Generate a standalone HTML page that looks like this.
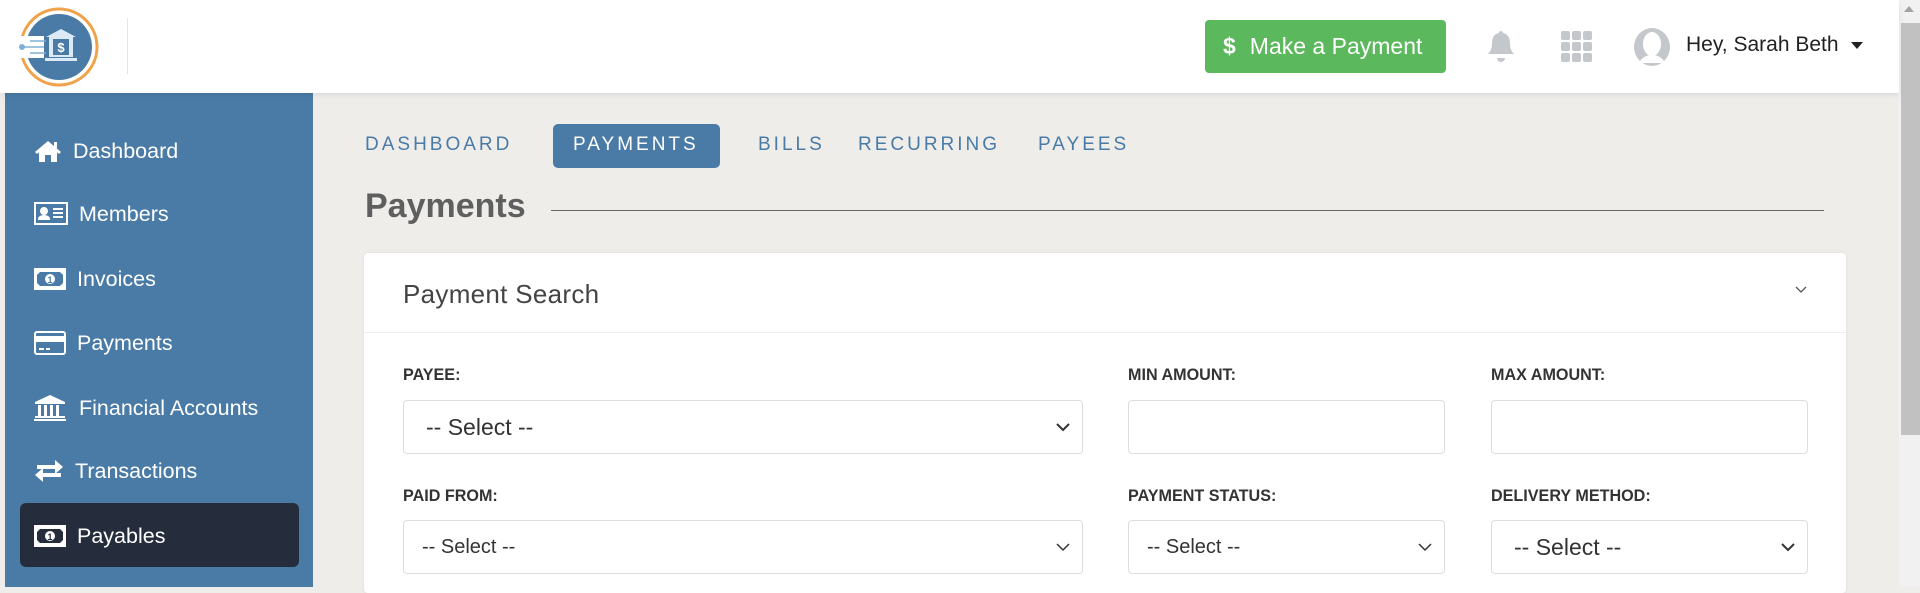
<!DOCTYPE html>
<html><head><meta charset="utf-8"><style>
*{box-sizing:border-box;margin:0;padding:0}
body{width:1920px;height:587px;overflow:hidden;background:#eeedea;font-family:"Liberation Sans",sans-serif;position:relative}
.hdr{position:absolute;left:0;top:0;width:1899px;height:93px;background:#fff;box-shadow:0 2px 6px rgba(0,0,0,.08);z-index:2}
.sb{position:absolute;left:5px;top:93px;width:308px;height:494px;background:#4a7ba6}
.item{position:absolute;left:0;width:308px;height:40px;color:#fff;font-size:21.5px;display:flex;align-items:center}
.item svg{position:absolute;left:29px}
.item span{position:absolute;left:68px}
.act{position:absolute;left:15px;top:410px;width:279px;height:64px;background:#252d3d;border-radius:6px}
.scroll{position:absolute;left:1899px;top:0;width:21px;height:587px;background:#f1f1f1}
.thumb{position:absolute;left:1901px;top:23px;width:19px;height:412px;background:#c1c1c1}
.tab{position:absolute;top:134px;font-size:19px;letter-spacing:3px;color:#4a7ba6}
.card{position:absolute;left:364px;top:253px;width:1482px;height:340px;background:#fff;border-radius:4px;box-shadow:0 0 3px rgba(0,0,0,.08)}
.lbl{position:absolute;font-size:17px;color:#333;font-weight:bold;transform:scaleX(.95);transform-origin:left}
.inp{position:absolute;height:54px;border:1px solid #ddd;border-radius:4px;background:#fff;font-size:22px;color:#333;padding-left:22px;display:flex;align-items:center}
.inp .ch{position:absolute;right:12px;top:22px}
</style></head><body>
<div class="hdr">
 <svg style="position:absolute;left:16px;top:6px" width="86" height="84" viewBox="0 0 86 84">
  <circle cx="43" cy="41" r="38" fill="none" stroke="#f0a24a" stroke-width="3"/>
  <circle cx="43" cy="41" r="33" fill="#4a7ba6"/>
  <rect x="-2" y="30" width="30" height="22" fill="#fff"/>
  <circle cx="6" cy="41" r="3" fill="#7eb0d6"/><line x1="6" y1="41" x2="28" y2="41" stroke="#7eb0d6" stroke-width="1.5"/>
  <line x1="14" y1="35" x2="30" y2="35" stroke="#7eb0d6" stroke-width="1.5"/><line x1="14" y1="47" x2="30" y2="47" stroke="#7eb0d6" stroke-width="1.5"/>
  <polygon points="30,31 45,23 60,31" fill="#dbeaf6"/>
  <rect x="33" y="31" width="24" height="20" fill="#dbeaf6"/><rect x="37" y="33" width="16" height="16" fill="#4a7ba6"/>
  <text x="45" y="46" font-size="13" font-weight="bold" fill="#fff" text-anchor="middle" font-family="Liberation Sans">$</text>
  <rect x="29" y="52" width="32" height="3" fill="#dbeaf6"/>
 </svg>
 <div style="position:absolute;left:127px;top:18px;width:1px;height:56px;background:#e5e5e5"></div>
 <div style="position:absolute;left:1205px;top:20px;width:241px;height:53px;background:#5cb85c;border-radius:4px;color:#fff;font-size:23px;display:flex;align-items:center;padding-left:18px"><b style="margin-right:14px;font-size:23px">$</b>Make a Payment</div>
 <svg style="position:absolute;left:1486px;top:29px" width="30" height="36" viewBox="0 0 30 36"><path d="M15 2c1.5 0 2 1 2 2 5 1 7 5 7 10 0 6 2 9 4 11H2c2-2 4-5 4-11 0-5 2-9 7-10 0-1 .5-2 2-2z" fill="#c4c8cd"/><path d="M11 29h8a4 4 0 0 1-8 0z" fill="#c4c8cd"/></svg>
 <svg style="position:absolute;left:1561px;top:31px" width="31" height="31" viewBox="0 0 31 31" fill="#c4c8cd"><rect x="0" y="0" width="9" height="9" rx="2"/><rect x="11" y="0" width="9" height="9" rx="2"/><rect x="22" y="0" width="9" height="9" rx="2"/><rect x="0" y="11" width="9" height="9" rx="2"/><rect x="11" y="11" width="9" height="9" rx="2"/><rect x="22" y="11" width="9" height="9" rx="2"/><rect x="0" y="22" width="9" height="9" rx="2"/><rect x="11" y="22" width="9" height="9" rx="2"/><rect x="22" y="22" width="9" height="9" rx="2"/></svg>
 <svg style="position:absolute;left:1633px;top:27px" width="38" height="40" viewBox="0 0 38 40"><ellipse cx="19" cy="20" rx="18" ry="19" fill="#c4c8cd"/><ellipse cx="19" cy="17" rx="9" ry="12" fill="#fff"/><path d="M6 36c3-6 8-8 13-8s10 2 13 8z" fill="#fff"/></svg>
 <div style="position:absolute;left:1686px;top:33px;font-size:21px;color:#222">Hey, Sarah Beth</div>
 <div style="position:absolute;left:1851px;top:42px;border-left:6px solid transparent;border-right:6px solid transparent;border-top:7px solid #222"></div>
</div>
<div class="scroll"></div><div class="thumb"></div>
<div style="position:absolute;left:1904px;top:6px;border-left:5px solid transparent;border-right:5px solid transparent;border-bottom:6px solid #a3a3a3"></div>
<div class="sb">
 <div class="act"></div>
 <div class="item" style="top:38px"><svg width="28" height="24" viewBox="0 0 28 24" fill="#fff"><path d="M14 2L1 13l2 2 11-9 11 9 2-2z"/><path d="M5 13l9-7 9 7v10h-6v-7h-6v7H5z"/><rect x="20" y="3" width="3" height="6"/></svg><span>Dashboard</span></div>
 <div class="item" style="top:101px"><svg width="34" height="24" viewBox="0 0 34 24" fill="none" stroke="#fff" stroke-width="2"><rect x="1" y="1" width="32" height="21"/><circle cx="10" cy="9" r="3" fill="#fff"/><path d="M5 17c0-4 10-4 10 0z" fill="#fff"/><path d="M19 7h10M19 11h10M19 15h10"/></svg><span style="left:74px">Members</span></div>
 <div class="item" style="top:166px"><svg width="32" height="22" viewBox="0 0 32 22"><rect x="0" y="0" width="32" height="22" fill="#fff"/><path d="M6 4h20l3 3v8l-3 3H6l-3-3V7z" fill="#4a7ba6"/><circle cx="16" cy="11" r="5" fill="#fff"/><text x="16" y="15" font-size="9" font-weight="bold" text-anchor="middle" fill="#4a7ba6">1</text></svg><span style="left:72px">Invoices</span></div>
 <div class="item" style="top:230px"><svg width="32" height="24" viewBox="0 0 32 24" fill="none" stroke="#fff" stroke-width="2"><rect x="1" y="1" width="30" height="22" rx="2"/><rect x="1" y="6" width="30" height="4" fill="#fff"/><path d="M5 18h5M12 18h4"/></svg><span style="left:72px">Payments</span></div>
 <div class="item" style="top:295px"><svg width="32" height="26" viewBox="0 0 32 26" fill="#fff"><path d="M16 0L1 7v2h30V7z"/><rect x="4" y="10" width="3" height="11"/><rect x="10" y="10" width="3" height="11"/><rect x="16" y="10" width="3" height="11"/><rect x="22" y="10" width="3" height="11"/><rect x="1" y="21" width="30" height="2"/><rect x="0" y="24" width="32" height="2"/></svg><span style="left:74px">Financial Accounts</span></div>
 <div class="item" style="top:358px"><svg width="30" height="24" viewBox="0 0 30 24" fill="#fff"><path d="M3 6h18V1l8 7-8 7v-5H3z"/><path d="M27 14H9V9l-8 7 8 7v-5h18z"/></svg><span style="left:70px">Transactions</span></div>
 <div class="item" style="top:423px"><svg width="32" height="22" viewBox="0 0 32 22"><rect x="0" y="0" width="32" height="22" fill="#fff"/><path d="M6 4h20l3 3v8l-3 3H6l-3-3V7z" fill="#252d3d"/><circle cx="16" cy="11" r="5" fill="#fff"/><text x="16" y="15" font-size="9" font-weight="bold" text-anchor="middle" fill="#252d3d">1</text></svg><span style="left:72px">Payables</span></div>
</div>
<div class="tab" style="left:365px">DASHBOARD</div>
<div style="position:absolute;left:553px;top:124px;width:167px;height:44px;background:#4a7ba6;border-radius:5px"></div>
<div class="tab" style="left:573px;color:#fff">PAYMENTS</div>
<div class="tab" style="left:758px">BILLS</div>
<div class="tab" style="left:858px">RECURRING</div>
<div class="tab" style="left:1038px">PAYEES</div>
<div style="position:absolute;left:365px;top:187px;font-size:34px;color:#5f5f5f;font-weight:bold">Payments</div>
<div style="position:absolute;left:551px;top:210px;width:1273px;height:1px;background:#666"></div>
<div class="card">
 <div style="position:absolute;left:39px;top:26px;font-size:26px;color:#444;letter-spacing:.3px">Payment Search</div>
 <svg style="position:absolute;left:1431px;top:33px" width="12" height="8" viewBox="0 0 12 8"><path d="M1 1l5 5 5-5" fill="none" stroke="#555" stroke-width="1.3"/></svg>
 <div style="position:absolute;left:0;top:79px;width:1482px;height:1px;background:#eee"></div>
 <div class="lbl" style="left:39px;top:112px">PAYEE:</div>
 <div class="lbl" style="left:764px;top:112px">MIN AMOUNT:</div>
 <div class="lbl" style="left:1127px;top:112px">MAX AMOUNT:</div>
 <div class="inp" style="left:39px;top:147px;width:680px;font-size:23px">-- Select --<svg class="ch" width="14" height="9" viewBox="0 0 14 9"><path d="M1 1l6 6 6-6" fill="none" stroke="#333" stroke-width="2"/></svg></div>
 <div class="inp" style="left:764px;top:147px;width:317px"></div>
 <div class="inp" style="left:1127px;top:147px;width:317px"></div>
 <div class="lbl" style="left:39px;top:233px">PAID FROM:</div>
 <div class="lbl" style="left:764px;top:233px">PAYMENT STATUS:</div>
 <div class="lbl" style="left:1127px;top:233px">DELIVERY METHOD:</div>
 <div class="inp" style="left:39px;top:267px;width:680px;font-size:20px;padding-left:18px">-- Select --<svg class="ch" width="14" height="9" viewBox="0 0 14 9"><path d="M1 1l6 6 6-6" fill="none" stroke="#333" stroke-width="1.5"/></svg></div>
 <div class="inp" style="left:764px;top:267px;width:317px;font-size:20px;padding-left:18px">-- Select --<svg class="ch" width="14" height="9" viewBox="0 0 14 9"><path d="M1 1l6 6 6-6" fill="none" stroke="#333" stroke-width="1.5"/></svg></div>
 <div class="inp" style="left:1127px;top:267px;width:317px;font-size:23px">-- Select --<svg class="ch" width="14" height="9" viewBox="0 0 14 9"><path d="M1 1l6 6 6-6" fill="none" stroke="#333" stroke-width="2"/></svg></div>
</div>
</body></html>
